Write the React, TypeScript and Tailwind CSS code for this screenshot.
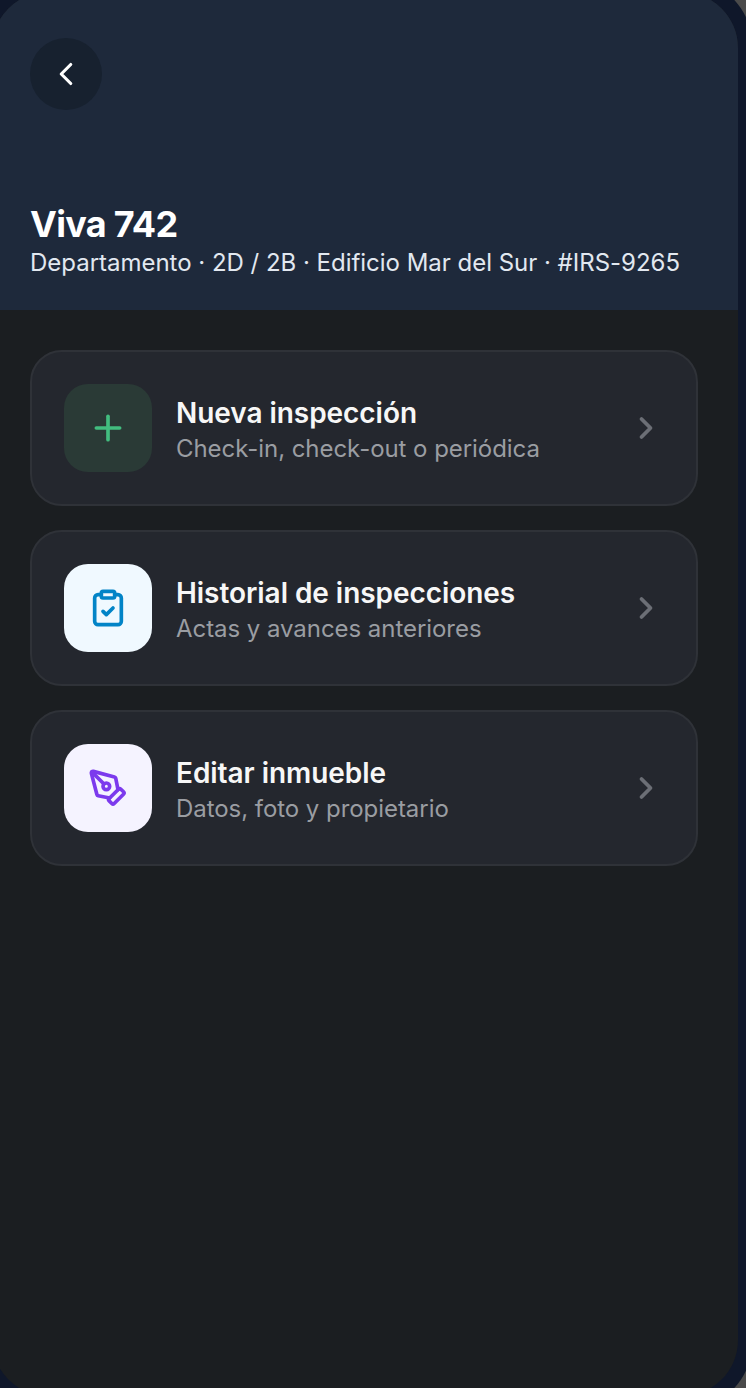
import { ChevronLeft, ChevronRight, ClipboardCheck, PenTool, Plus } from "lucide-react"

const actions = [
  {
    title: "Nueva inspección",
    subtitle: "Check-in, check-out o periódica",
    icon: Plus,
    iconBox: "bg-[#2a3a36]",
    iconColor: "text-[#42bd7f]",
  },
  {
    title: "Historial de inspecciones",
    subtitle: "Actas y avances anteriores",
    icon: ClipboardCheck,
    iconBox: "bg-[#f0f9ff]",
    iconColor: "text-[#0284c7]",
  },
  {
    title: "Editar inmueble",
    subtitle: "Datos, foto y propietario",
    icon: PenTool,
    iconBox: "bg-[#f5f3ff]",
    iconColor: "text-[#7c3aed]",
  },
]

export default function App() {
  return (
    <div className="w-[746px] h-[1388px] overflow-hidden bg-[#4a4a4a] font-['Inter',sans-serif]">
      {/* device frame runs past the edges of the shot */}
      <div className="-ml-[23px] -mt-[23px] w-[776px] h-[1434px] rounded-[71px] bg-[#0f172a] p-[15px]">
        <div className="w-[746px] h-[1404px] rounded-[56px] overflow-hidden bg-[#1b1e21]">
          <header className="h-[318px] bg-[#1e293b] pl-[38px] pt-[46px]">
            <button className="w-[72px] h-[72px] rounded-full bg-[#17212f] flex items-center justify-center text-white">
              <ChevronLeft size={38} strokeWidth={2} />
            </button>
            <h1 className="mt-[92px] text-[36px] leading-[44px] font-bold tracking-[-0.72px] text-white">Viva 742</h1>
            <p className="mt-[1px] text-[24px] leading-[32px] tracking-[-0.02px] text-[#e2e8f0]">
              Departamento · 2D / 2B · Edificio Mar del Sur · #IRS-9265
            </p>
          </header>

          <div className="pl-[38px] pt-[40px] flex flex-col gap-[24px]">
            {actions.map((action) => (
              <div
                key={action.title}
                className="w-[668px] h-[156px] rounded-[32px] border-2 border-[#2f3238] bg-[#24272e] flex items-center pl-[32px] pr-[32px]"
              >
                <div className={`w-[88px] h-[88px] rounded-[24px] flex items-center justify-center ${action.iconBox}`}>
                  <action.icon size={40} strokeWidth={2.2} className={action.iconColor} />
                </div>
                <div className="ml-[24px] flex-1 pt-[3px]">
                  <div className="text-[28px] leading-[36px] font-semibold tracking-[-0.05px] text-[#f7f7f7]">{action.title}</div>
                  <div className="mt-[2px] text-[24px] leading-[32px] tracking-[-0.05px] text-[#9a9da2]">{action.subtitle}</div>
                </div>
                <ChevronRight size={36} strokeWidth={2.5} className="text-[#6b6e75]" />
              </div>
            ))}
          </div>
        </div>
      </div>
    </div>
  )
}
